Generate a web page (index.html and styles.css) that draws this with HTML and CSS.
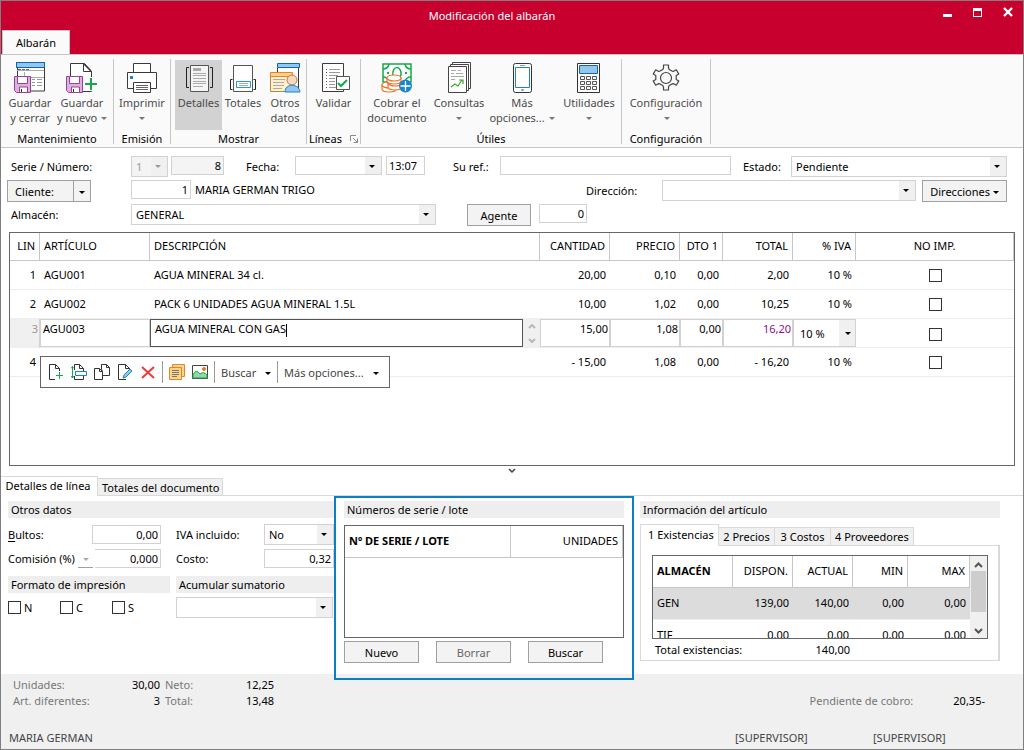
FILE: index.html
```html
<!DOCTYPE html>
<html lang="es">
<head>
<meta charset="utf-8">
<meta name="viewport" content="width=device-width, initial-scale=1">
<title>Modificación del albarán</title>
<link rel="stylesheet" href="styles.css">
</head>
<body>
<div class="window">
  <header class="titlebar">
    <h1 class="title">Modificación del albarán</h1>
    <div class="window-controls">
      <button type="button" aria-label="Minimizar"><svg width="12" height="12" viewBox="0 0 12 12"><path d="M1 8h9v3H1z" fill="#fff"/></svg></button>
      <button type="button" aria-label="Maximizar"><svg width="12" height="12" viewBox="0 0 12 12"><path d="M1 2h9v9H1zM2 5v5h7V5z" fill="#fff" fill-rule="evenodd"/></svg></button>
      <button type="button" aria-label="Cerrar"><svg width="12" height="12" viewBox="0 0 12 12"><path d="M2 2l8 8M10 2l-8 8" stroke="#fff" stroke-width="2.4"/></svg></button>
    </div>
    <button type="button" class="main-tab">Albarán</button>
  </header>

  <nav class="ribbon">
    <section class="group g-mant">
      <div class="tools">
        <button type="button" class="tool"><svg width="32" height="32" viewBox="0 0 32 32" fill="none"><path d="M3.500 7v23h27V7" fill="#fff" stroke="#3a3a3a"/><path d="M3 9.500h27M10 16.500h20M10.500 11v8" stroke="#aaa"/><path d="M4 8.500h3m1 0h3m1 0h3" stroke="#666"/><path d="M18 18.500h3m2 0h5M18 21.500h3m2 0h5M18 24.500h3m2 0h5" stroke="#999"/><rect x="2.500" y="1.500" width="28" height="5" fill="#92c7ee" stroke="#1266b1"/><path d="M.5 15.500h16v16h-14l-2-2z" fill="#deb0de" stroke="#98419a"/><path d="M3.500 15.500h10v7h-10zM5.500 31v-5h8v5" fill="#fff" stroke="#98419a"/><path d="M7.500 28v3" stroke="#333"/></svg><span>Guardar<br>y cerrar</span></button>
        <button type="button" class="tool"><svg width="32" height="32" viewBox="0 0 32 32" fill="none"><path d="M4.500 30V2.500h14l7 8v20H17" fill="#fff" stroke="#3a3a3a"/><path d="M17.500 2.500v8h8" stroke="#3a3a3a"/><path d="M18 3l7 7" stroke="#3a3a3a" stroke-width="1.500"/><path d="M.5 15.500h16v16h-14l-2-2z" fill="#deb0de" stroke="#98419a"/><path d="M3.500 15.500h10v7h-10zM5.500 31v-5h8v5" fill="#fff" stroke="#98419a"/><path d="M7.500 28v3" stroke="#333"/><path d="M24.500 16v14M17 23h15" stroke="#fafafa" stroke-width="4"/><path d="M25 17v12M19 23h12" stroke="#17a84a" stroke-width="2"/></svg><span>Guardar<br>y nuevo <i class="caret"></i></span></button>
      </div>
      <h2>Mantenimiento</h2>
    </section>
    <section class="group g-emis">
      <div class="tools">
        <button type="button" class="tool"><svg width="32" height="32" viewBox="0 0 32 32" fill="none" stroke="#3a3a3a"><path d="M7.500 12V2.500h17V12" fill="#fff"/><path d="M7 27.500H1.500v-16h29v16H25" fill="#fff"/><path d="M7.500 21.500h17v10h-17z" fill="#fff"/><path d="M10 24.500h12M10 26.500h12M10 28.500h12" stroke="#666"/><path d="M4 15h3v3H4z" fill="#1b83d3" stroke="none"/></svg><span>Imprimir<br><i class="caret"></i></span></button>
      </div>
      <h2>Emisión</h2>
    </section>
    <section class="group g-most">
      <div class="tools">
        <button type="button" class="tool active"><svg width="32" height="32" viewBox="0 0 32 32" fill="none"><path d="M7.500 4.500h18v26h-18z" fill="#f5f5f5" stroke="#555"/><path d="M10 7h8v3h-8z" fill="#aaa"/><path d="M10 12.500h13M10 14.500h13M10 17.500h13M10 20.500h13M10 22.500h13M10 25.500h10" stroke="#aaa"/><path d="M6 6.500H3.500v20H6M27 6.500h2.500v20H27" stroke="#222"/></svg><span>Detalles</span></button>
        <button type="button" class="tool"><svg width="32" height="32" viewBox="0 0 32 32" fill="none"><path d="M6.500 4.500h19v26h-19z" fill="#fff" stroke="#555"/><path d="M9.500 20.500h14v6h-14z" fill="#fff" stroke="#199bdc"/><path d="M12 22.500h9M12 24.500h9" stroke="#aaa"/><path d="M5.500 18.500h-2v10h2M26.500 18.500h2v10h-2" stroke="#222"/></svg><span>Totales</span></button>
        <button type="button" class="tool"><svg width="32" height="32" viewBox="0 0 32 32" fill="none"><path d="M8.500 7v22h21V7" fill="#fff" stroke="#3a3a3a"/><path d="M8.500 2.500h22v4h-22z" fill="#92c7ee" stroke="#1266b1"/><path d="M1.500 15h22v15.500h-22z" fill="#fff0cc" stroke="#b18a45"/><path d="M1.500 11.500h22v4h-22z" fill="#ffd285" stroke="#e7842b"/><path d="M4 18.500h12M4 21.500h11M4 24.500h11M4 27.500h9" stroke="#aaa"/><circle cx="23" cy="19" r="5" fill="#f8d8bc" stroke="#b67c5a"/><path d="M16 31c0-9 14-9 15 0z" fill="#92c7ee" stroke="#1b83c9"/></svg><span>Otros<br>datos</span></button>
      </div>
      <h2>Mostrar</h2>
    </section>
    <section class="group g-line">
      <div class="tools">
        <button type="button" class="tool"><svg width="32" height="32" viewBox="0 0 32 32" fill="none"><path d="M4.500 2.500h21v28h-21z" fill="#fff" stroke="#3a3a3a"/><path d="M11 8.500h11M11 11.500h11M11 14.500h9M11 17.500h6M11 20.500h6M11 23.500h6M11 26.500h7" stroke="#999"/><path d="M8 8h1v1H8zM8 14h1v1H8zM8 17h1v1H8zM8 23h1v1H8z" fill="#17a84a"/><path d="M8 11h1v1H8zM8 20h1v1H8zM8 26h1v1H8z" fill="#d22"/><path d="M18.500 15.500h13v13h-13z" fill="#fff" stroke="#555"/><path d="M20 22l3 3 6-6" stroke="#17a84a" stroke-width="2"/></svg><span>Validar</span></button>
      </div>
      <h2>Líneas <svg class="launcher" width="8" height="8" viewBox="0 0 8 8" fill="none" stroke="#888"><path d="M.5 6V.5H6M3 3l4 4M7.500 3.500v4h-4"/></svg></h2>
    </section>
    <section class="group g-util">
      <div class="tools">
        <button type="button" class="tool t-cob"><svg width="32" height="32" viewBox="0 0 32 32" fill="none"><path d="M2 3h28v18H2z" fill="#fff" stroke="#17a84a" stroke-width="1.500"/><path d="M2 8q5 0 6-5M24 3q1 5 6 5M2 16q5 0 6 5M24 21q1-5 6-5" stroke="#17a84a" stroke-width="1.500"/><path d="M12 15c-2-11 9-11 8-1l-2 4" stroke="#17a84a" stroke-width="1.500"/><circle cx="7" cy="12" r="1.200" fill="#17a84a"/><circle cx="25" cy="12" r="1.200" fill="#17a84a"/><g fill="#fff" stroke="#ec7426" stroke-width="1.200"><path d="M1 24v4c0 4 14 4 14 0v-4z"/><ellipse cx="8" cy="24" rx="7" ry="3"/><path d="M7 22v4c0 4 14 4 14 0v-4z"/><ellipse cx="14" cy="22" rx="7" ry="3"/><path d="M6 17v3c0 4 14 4 14 0v-3z"/><ellipse cx="13" cy="17" rx="7" ry="3"/></g><circle cx="24.500" cy="25" r="6.500" fill="#1b83c9"/><path d="M24.500 20v10M19.500 25h10" stroke="#fff" stroke-width="1.300"/></svg><span>Cobrar el<br>documento</span></button>
        <button type="button" class="tool t-cons"><svg width="32" height="32" viewBox="0 0 32 32" fill="#fff" stroke="#444"><path d="M9.500 1.500h18v26h-18z"/><path d="M7.500 3.500h18v26h-18z"/><path d="M5.500 5.500h18v26h-18z"/><path d="M8 9.500h5m2 0h3M8 12.500h3m2 0h7M8 15.500h13M8 18.500h4" fill="none" stroke="#aaa"/><path d="M8 26l4-3 3 2 4-6m-3 0h4v4" fill="none" stroke="#3ca52d" stroke-width="1.200"/></svg><span>Consultas<br><i class="caret"></i></span></button>
        <button type="button" class="tool t-mas"><svg width="32" height="32" viewBox="0 0 32 32" fill="none"><rect x="7.500" y="2.500" width="18" height="29" rx="2" fill="#fff" stroke="#333"/><path d="M9.500 6.500h14v20h-14z" stroke="#1b83d3"/><path d="M14 4.500h5M15.500 28.500h2v1h-2z" stroke="#999"/></svg><span>Más<br>opciones... <i class="caret"></i></span></button>
        <button type="button" class="tool t-utl"><svg width="32" height="32" viewBox="0 0 32 32" fill="none"><path d="M4.500 2.500h22v29h-22z" fill="#fff" stroke="#333"/><path d="M6.500 4.500h18v8h-18z" fill="#92c7ee" stroke="#1266b1"/><path d="M7.500 15.500h4v3h-4zM13.500 15.500h4v3h-4zM19.500 15.500h4v3h-4zM7.500 20.500h4v3h-4zM13.500 20.500h4v3h-4zM19.500 20.500h4v3h-4zM7.500 25.500h4v3h-4zM13.500 25.500h4v3h-4zM19.500 25.500h4v3h-4z" stroke="#555"/></svg><span>Utilidades<br><i class="caret"></i></span></button>
      </div>
      <h2>Útiles</h2>
    </section>
    <section class="group g-conf">
      <div class="tools">
        <button type="button" class="tool"><svg width="32" height="32" viewBox="0 0 32 32" fill="none" stroke="#444" stroke-width="1.200" stroke-linejoin="round"><path d="M12.800 8.500L13.500 7V4h5v3l.7 1.500 2.800 1.600 1.700.2 2.600-1.500 2.500 4.300-2.600 1.500v3.800l2.600 1.500-2.500 4.300-2.600-1.500-1.700.2-2.800 1.600-.7 1.500v3h-5v-3l-.7-1.500-2.800-1.600-1.700-.2-2.600 1.500-2.500-4.300 2.600-1.500v-3.800l-2.600-1.500 2.500-4.300 2.600 1.500 1.700-.2z"/><circle cx="16" cy="17" r="5.500"/></svg><span>Configuración<br><i class="caret"></i></span></button>
      </div>
      <h2>Configuración</h2>
    </section>
  </nav>

  <main class="document">
    <form class="head-form">
      <div class="row">
        <label class="lead" for="serie">Serie / Número:</label>
        <span class="combo off w-serie"><select id="serie" disabled><option>1</option></select></span>
        <input class="field num off w-num" aria-label="Número" value="8" readonly>
        <label class="l-fecha" for="fecha">Fecha:</label>
        <span class="combo short w-fecha"><select id="fecha"><option></option></select></span>
        <input class="field w-hora" aria-label="Hora" value="13:07">
        <label class="l-ref" for="ref">Su ref.:</label>
        <input class="field grow" id="ref">
        <label class="l-estado" for="estado">Estado:</label>
        <span class="combo w-estado"><select id="estado"><option>Pendiente</option></select></span>
      </div>
      <div class="row row-client">
        <span class="split"><button type="button">Cliente:</button><button type="button" class="more" aria-label="Opciones de cliente"><i class="caret"></i></button></span>
        <input class="field num w-cli" aria-label="Código de cliente" value="1">
        <span class="client-name grow">MARIA GERMAN TRIGO</span>
        <label class="l-dir" for="dir">Dirección:</label>
        <span class="combo w-dir"><select id="dir"><option></option></select></span>
        <button type="button" class="btn w-dirs">Direcciones <i class="caret"></i></button>
      </div>
      <div class="row">
        <label class="lead" for="almacen">Almacén:</label>
        <span class="combo w-alm"><select id="almacen"><option>GENERAL</option></select></span>
        <button type="button" class="btn w-agente">Agente</button>
        <input class="field num w-ag" aria-label="Código de agente" value="0">
      </div>
    </form>

    <div class="lines">
      <table class="grid">
        <colgroup><col class="c-lin"><col class="c-art"><col><col class="c-70"><col class="c-70"><col class="c-dto"><col class="c-70"><col class="c-iva"><col class="c-imp"></colgroup>
        <thead><tr><th class="r">LIN</th><th>ARTÍCULO</th><th>DESCRIPCIÓN</th><th class="r">CANTIDAD</th><th class="r">PRECIO</th><th class="r">DTO 1</th><th class="r">TOTAL</th><th class="r">% IVA</th><th class="c">NO IMP.</th></tr></thead>
        <tbody>
          <tr><td class="r">1</td><td>AGU001</td><td>AGUA MINERAL 34 cl.</td><td class="r">20,00</td><td class="r">0,10</td><td class="r">0,00</td><td class="r">2,00</td><td class="r">10 %</td><td class="c"><input type="checkbox" aria-label="No imprimir línea 1"></td></tr>
          <tr><td class="r">2</td><td>AGU002</td><td>PACK 6 UNIDADES AGUA MINERAL 1.5L</td><td class="r">10,00</td><td class="r">1,02</td><td class="r">0,00</td><td class="r">10,25</td><td class="r">10 %</td><td class="c"><input type="checkbox" aria-label="No imprimir línea 2"></td></tr>
          <tr class="editing"><td class="lin">3</td><td><input class="cell" aria-label="Artículo" value="AGU003"></td><td><div class="desc"><div class="desc-edit" contenteditable="true" role="textbox" aria-label="Descripción">AGUA MINERAL CON GAS<i class="cursor"></i></div><div class="spin"><svg width="8" height="5" viewBox="0 0 8 5"><path d="M1 4l3-3 3 3" fill="none" stroke="#b8b8b8" stroke-width="2"/></svg><svg width="8" height="5" viewBox="0 0 8 5"><path d="M1 1l3 3 3-3" fill="none" stroke="#b8b8b8" stroke-width="2"/></svg></div></div></td><td><input class="cell num" aria-label="Cantidad" value="15,00"></td><td><input class="cell num" aria-label="Precio" value="1,08"></td><td><input class="cell num" aria-label="Descuento" value="0,00"></td><td><input class="cell num total" aria-label="Total" value="16,20"></td><td><span class="combo in-cell"><select aria-label="IVA"><option>10 %</option></select></span></td><td class="c"><input type="checkbox" aria-label="No imprimir línea 3"></td></tr>
          <tr><td class="r">4</td><td></td><td></td><td class="r">- 15,00</td><td class="r">1,08</td><td class="r">0,00</td><td class="r">- 16,20</td><td class="r">10 %</td><td class="c"><input type="checkbox" aria-label="No imprimir línea 4"></td></tr>
        </tbody>
      </table>
      <div class="popup" role="toolbar" aria-label="Acciones de línea">
        <button type="button" aria-label="Nueva línea"><svg width="16" height="16" viewBox="0 0 16 16" fill="none" stroke="#333"><path d="M7 15.500H1.500V.5h6l4 4V7M7.500.5v4h4"/><path d="M11.500 8v7M8 11.500h7" stroke="#17a84a"/></svg></button>
        <button type="button" aria-label="Insertar línea"><svg width="16" height="16" viewBox="0 0 16 16" fill="none" stroke="#333"><path d="M3.500 6V.5h5l4 4V7M8.500.5v4h4M3.500 12v3.500h9V12"/><path d="M4.500 7.500h11v4h-11z" fill="#fff" stroke="#1b83c9"/><path d="M1.500 2v12M0 4.500l1.500-2 1.500 2M0 12l1.500 2L3 12" stroke="#17a84a"/></svg></button>
        <button type="button" aria-label="Duplicar línea"><svg width="16" height="16" viewBox="0 0 16 16" fill="#fff" stroke="#333"><path d="M.5 4.500h5l3 3v8h-8zM5.500 4.500v3h3"/><path d="M7.500 5V.5h5l3 3v8h-7V8zM12.500.5v3h3"/></svg></button>
        <button type="button" aria-label="Editar línea"><svg width="16" height="16" viewBox="0 0 16 16" fill="none" stroke="#333"><path d="M9 15.500H1.500V.5h7l4 4V6M8.500.5v4h4"/><path d="M6 14l1-3 6-6 2 2-6 6z" fill="#92c7ee" stroke="#1b83c9"/></svg></button>
        <button type="button" aria-label="Borrar línea"><svg width="16" height="16" viewBox="0 0 16 16"><path d="M2 3l12 11M14 3L2 14" stroke="#ee3a36" stroke-width="2"/></svg></button>
        <span class="bar"></span>
        <button type="button" aria-label="Notas"><svg width="16" height="16" viewBox="0 0 16 16" fill="#f8d588" stroke="#e7842b"><path d="M3.500 .5h12v12h-12z"/><path d="M.5 3.500h12v12h-12z"/><path d="M3 6.500h7M3 8.500h7M3 10.500h7M3 12.500h5" stroke="#777"/></svg></button>
        <button type="button" aria-label="Imagen"><svg width="16" height="16" viewBox="0 0 16 16" fill="#fff" stroke="#444"><path d="M.5 1.500h15v13H.5z"/><path d="M1 11q3-7 7-1 4-3 7 1v3H1z" fill="#94d6a5" stroke="#17a84a"/><circle cx="12" cy="5" r="1.500" fill="#ec7426" stroke="#ec7426"/></svg></button>
        <span class="bar"></span>
        <button type="button" class="p-buscar">Buscar <i class="caret"></i></button>
        <span class="bar"></span>
        <button type="button" class="p-mas">Más opciones... <i class="caret"></i></button>
      </div>
    </div>
    <button type="button" class="expander" aria-label="Contraer panel"><svg width="8" height="6" viewBox="0 0 8 6"><path d="M1 1l3 3 3-3" fill="none" stroke="#444" stroke-width="1.500"/></svg></button>
  </main>

  <div class="tabs detail-tabs" role="tablist">
    <button type="button" class="tab on" role="tab" aria-selected="true">Detalles de línea</button>
    <button type="button" class="tab" role="tab" aria-selected="false">Totales del documento</button>
  </div>

  <div class="panels">
    <section class="other">
      <h3 class="wide">Otros datos</h3>
      <div class="pair">
        <label for="bultos"><u>B</u>ultos:</label>
        <input class="field num w-69" id="bultos" value="0,00">
        <label for="comision">Comisión (%)</label>
        <span class="commission"><button type="button" class="mini" aria-label="Tipo de comisión"><i class="caret"></i></button><input class="field num" id="comision" value="0,000"></span>
      </div>
      <div class="pair second">
        <label for="iva">IVA incluido:</label>
        <span class="combo"><select id="iva"><option>No</option></select></span>
        <label for="costo">Costo:</label>
        <input class="field num" id="costo" value="0,32">
      </div>
      <h3>Formato de impresión</h3>
      <h3 class="second">Acumular sumatorio</h3>
      <div class="checks">
        <label><input type="checkbox">N</label>
        <label><input type="checkbox">C</label>
        <label><input type="checkbox">S</label>
      </div>
      <span class="combo second acum"><select aria-label="Acumular sumatorio"><option></option></select></span>
    </section>

    <section class="serials">
      <h3>Números de serie / lote</h3>
      <div class="serial-box">
        <table class="grid serial-table">
          <colgroup><col><col class="c-uni"></colgroup>
          <thead><tr><th><b>Nº DE SERIE / LOTE</b></th><th class="r">UNIDADES</th></tr></thead>
        </table>
      </div>
      <div class="actions">
        <button type="button" class="btn">Nuevo</button>
        <button type="button" class="btn" disabled>Borrar</button>
        <button type="button" class="btn">Buscar</button>
      </div>
    </section>

    <section class="article">
      <h3>Información del artículo</h3>
      <div class="tabs article-tabs" role="tablist">
        <button type="button" class="tab on" role="tab" aria-selected="true">1 Existencias</button>
        <button type="button" class="tab" role="tab" aria-selected="false">2 Precios</button>
        <button type="button" class="tab" role="tab" aria-selected="false">3 Costos</button>
        <button type="button" class="tab" role="tab" aria-selected="false">4 Proveedores</button>
      </div>
      <div class="sheet">
        <div class="stock">
          <div class="stock-view">
            <table class="grid stock-table">
              <colgroup><col><col class="c-60"><col class="c-60"><col class="c-55"><col class="c-62"></colgroup>
              <thead><tr><th><b>ALMACÉN</b></th><th class="r">DISPON.</th><th class="r">ACTUAL</th><th class="r">MIN</th><th class="r">MAX</th></tr></thead>
              <tbody>
                <tr class="selected"><td>GEN</td><td class="r">139,00</td><td class="r">140,00</td><td class="r">0,00</td><td class="r">0,00</td></tr>
                <tr><td>TIF</td><td class="r">0,00</td><td class="r">0,00</td><td class="r">0,00</td><td class="r">0,00</td></tr>
              </tbody>
            </table>
          </div>
          <div class="scrollbar"><svg width="9" height="6" viewBox="0 0 9 6"><path d="M1 5l3.500-3.500L8 5" fill="none" stroke="#555" stroke-width="2"/></svg><div class="thumb"></div><svg width="9" height="6" viewBox="0 0 9 6"><path d="M1 1l3.500 3.500L8 1" fill="none" stroke="#555" stroke-width="2"/></svg></div>
        </div>
        <div class="stock-total"><span>Total existencias:</span><output>140,00</output></div>
      </div>
    </section>
  </div>

  <footer class="footer">
    <div class="summary">
      <dl class="totals">
        <dt>Unidades:</dt><dd>30,00</dd><dt>Neto:</dt><dd>12,25</dd>
        <dt>Art. diferentes:</dt><dd>3</dd><dt>Total:</dt><dd>13,48</dd>
      </dl>
      <dl class="pending"><dt>Pendiente de cobro:</dt><dd>20,35-</dd></dl>
    </div>
    <div class="status"><span class="grow">MARIA GERMAN</span><span class="user">[SUPERVISOR]</span><span class="user">[SUPERVISOR]</span></div>
  </footer>
</div>
</body>
</html>
```
FILE: styles.css
```css
* { box-sizing: border-box; }
body { margin: 0; font: 11px/15px "Noto Sans", "Open Sans", sans-serif; color: #000; }
button, input, select { font: inherit; color: inherit; margin: 0; padding: 0; border: 0; border-radius: 0; background: none; }
h1, h2, h3, dl, dd { margin: 0; font-size: inherit; font-weight: normal; }
svg { display: block; }
u { text-underline-offset: 2px; }

.window { display: flex; flex-direction: column; min-height: 100vh; border: 1px solid #7f7f7f; background: #fff; }
.grow { flex: 1; }
.caret { display: inline-block; border: 3px solid transparent; border-top-color: currentColor; border-bottom: 0; vertical-align: 2px; }

/* Title bar */
.titlebar { position: relative; display: flex; flex-direction: column; height: 54px; background: #c8002d; border-bottom: 1px solid #c6c6c6; }
.title { height: 29px; line-height: 29px; padding-right: 40px; text-align: center; color: #fff; }
.window-controls { position: absolute; right: 9px; top: 5px; display: flex; gap: 18px; }
.main-tab { align-self: flex-start; width: 68px; height: 25px; margin-left: 1px; background: #fafafa; border: 1px solid #c6c6c6; border-bottom: 0; }

/* Ribbon */
.ribbon { display: flex; padding: 4px 0 3px; background: #fafafa; border-bottom: 1px solid #c6c6c6; }
.group { display: flex; flex-direction: column; height: 85px; border-right: 1px solid #c6c6c6; }
.group h2 { display: flex; justify-content: center; align-items: center; gap: 8px; line-height: 11px; }
.tools { display: flex; flex: 1; justify-content: center; padding-top: 1px; }
.tool { display: flex; flex: 1; flex-direction: column; align-items: center; height: 70px; padding-top: 1px; gap: 2px; color: #4b4b4b; white-space: nowrap; }
.tool .caret { color: #777; margin-left: 1px; }
.tool.active { flex: 0 0 47px; background: #d2d2d2; }
.g-mant { width: 113px; }
.g-mant .tools { padding-right: 5px; padding-left: 3px; }
.g-emis { width: 57px; }
.g-most { width: 136px; }
.g-most .tools { padding-left: 4px; }
.g-line { width: 54px; }
.g-util { width: 261px; }
.g-util .tools { justify-content: flex-start; }
.t-cob { flex: 0 0 72px; }
.t-cons { flex: 0 0 52px; }
.t-mas { flex: 0 0 74px; }
.t-utl { flex: 0 0 60px; }
.g-conf { width: 89px; }

/* Form */
.document { display: flex; flex: 1; flex-direction: column; padding: 8px 8px 0; }
.head-form { display: flex; flex-direction: column; gap: 2px; padding-right: 8px; }
.row { display: flex; height: 22px; line-height: 22px; }
.field, .combo select { height: 19px; border: 1px solid #d2d2d2; background-color: #fff; }
.field { min-width: 0; padding: 0 2px; line-height: 15px; }
.num { text-align: right; }
.combo { position: relative; display: block; line-height: 15px; }
.combo select { display: block; width: 100%; height: 21px; padding: 0 18px 0 4px; appearance: none; background: linear-gradient(#f0f0f0, #f0f0f0) right / 16px 100% no-repeat #fff; }
.combo.short select { height: 19px; }
.combo::after { content: ""; position: absolute; right: 7px; top: 9px; border: 3px solid transparent; border-top-color: currentColor; border-bottom: 0; pointer-events: none; }
.off.field, .off select { background-color: #f4f4f4; opacity: 1; }
.combo.off { color: #999; }
.btn, .split button { border: 1px solid #a0a0a0; background: #f3f3f3; line-height: 15px; }
.btn { height: 22px; }
.btn:disabled { color: #666; }
.lead { width: 122px; padding-left: 2px; }
.w-serie { width: 37px; }
.w-num { width: 53px; margin-left: 3px; }
.l-fecha { width: 71px; padding-left: 22px; }
.w-fecha { width: 87px; }
.w-hora { width: 39px; margin-left: 4px; }
.l-ref { width: 75px; padding-left: 28px; }
.l-estado { width: 60px; padding-left: 12px; }
.w-estado { width: 216px; }
.row-client { margin-left: -2px; }
.split { display: flex; width: 84px; height: 22px; margin-right: 40px; }
.split button { flex: 1; padding-right: 12px; }
.split .more { flex: 0 0 17px; padding: 0; border-left: 0; }
.w-cli { width: 60px; margin-right: 4px; }
.client-name { line-height: 20px; }
.l-dir { width: 76px; }
.w-dir { width: 254px; margin-right: 6px; }
.w-dirs { width: 85px; white-space: nowrap; }
.w-alm { width: 305px; }
.w-agente { width: 64px; margin: 0 8px 0 31px; }
.w-ag { width: 48px; }

/* Document lines */
.lines { position: relative; flex: 1; margin-top: 6px; border: 1px solid #666; }
.grid { width: 100%; table-layout: fixed; border-collapse: separate; border-spacing: 0; }
.grid th, .grid td { padding: 0 4px 2px; text-align: left; font-weight: normal; white-space: nowrap; }
.grid th { height: 28px; border-right: 1px solid #c6c6c6; border-bottom: 1px solid #c6c6c6; }
.grid td { height: 29px; border-bottom: 1px solid #eee; }
.grid .r { text-align: right; }
.grid .c { text-align: center; }
.c-lin { width: 30px; }
.c-art { width: 110px; }
.c-70 { width: 70px; }
.c-dto { width: 43px; }
.c-iva { width: 63px; }
.c-imp { width: 158px; }
.grid .editing td { padding: 0; }
.grid .editing .lin { padding: 2px 1px; vertical-align: top; text-align: right; color: #999; background: #f0f0f0; border-right: 1px solid #d2d2d2; }
.cell { display: block; width: 100%; height: 28px; padding: 0 1px 10px 2px; border: 1px solid #d2d2d2; }
.total { color: #8a0f8a; }
.desc { display: flex; height: 28px; }
.desc-edit { flex: 1; padding: 1px 4px; border: 1px solid #555; outline: 0; }
.cursor { display: inline-block; width: 1px; height: 13px; background: #000; vertical-align: middle; }
.spin { display: flex; flex-direction: column; justify-content: space-around; align-items: center; width: 17px; background: #f0f0f0; }
.in-cell select { height: 28px; padding-left: 6px; }
.in-cell::after { top: 13px; right: 5px; }
input[type=checkbox] { appearance: none; width: 13px; height: 13px; margin: 0; border: 1px solid #333; background: #fff; vertical-align: middle; }
.popup { position: absolute; left: 30px; top: 123px; display: flex; align-items: center; gap: 7px; width: 350px; height: 32px; padding: 0 7px; border: 1px solid #666; background: #fff; color: #444; white-space: nowrap; }
.popup .bar { width: 1px; height: 22px; background: #999; margin: 0 -1px; }
.popup .caret { margin-left: 6px; color: #000; }
.expander { align-self: center; height: 10px; }

/* Tabs */
.tabs { display: flex; align-items: flex-end; }
.tab { height: 18px; padding: 0 4px; border: 1px solid #d9d9d9; border-left: 0; border-bottom: 0; background: #f0f0f0; white-space: nowrap; }
.tab.on { height: 20px; background: #fff; }
.detail-tabs { height: 20px; box-shadow: inset 0 -1px #d9d9d9; }
.detail-tabs .on { width: 97px; padding: 0 6px 2px 4px; }
.detail-tabs .tab:not(.on) { width: 125px; border-bottom: 1px solid #d9d9d9; }

/* Lower panels */
.panels { display: grid; grid-template-columns: 333px 300px minmax(360px, 1fr); height: 178px; }
.panels h3 { height: 17px; line-height: 17px; padding: 0 3px; background: #eee; }
.other { display: grid; grid-template-columns: 162px 158px; column-gap: 6px; align-content: start; padding: 5px 0 0 7px; overflow: hidden; }
.wide { grid-column: span 2; }
.pair { display: grid; grid-template-columns: 84px 1fr; gap: 3px 0; align-items: center; grid-auto-rows: 21px; padding: 6px 9px 7px 0; }
.pair.second { grid-template-columns: 88px 1fr; padding-right: 0; }
.pair label { white-space: nowrap; }
.pair .field { width: 100%; }
.commission { display: flex; margin-left: -14px; gap: 2px; }
.mini { flex: 0 0 15px; border-bottom: 1px solid #a0a0a0; color: #aaa; }
.commission .field { border-left: 0; }
.checks { display: flex; align-items: center; height: 29px; }
.checks label { display: flex; align-items: center; gap: 3px; width: 52px; }
.acum { margin: 4px 1px 0 0; }
.serials { position: relative; height: 184px; padding: 3px 8px; border: 2px solid #0a7fc4; }
.serial-box { height: 113px; margin-top: 7px; border: 1px solid #666; }
.serial-table th { height: 32px; }
.c-uni { width: 112px; }
.actions { display: flex; gap: 17px; margin-top: 3px; }
.actions .btn { width: 75px; }
.article { padding: 5px 23px 0 6px; }
.article-tabs { margin-top: 6px; }
.article-tabs .tab { min-width: 56px; }
.article-tabs .tab:last-child { min-width: 82px; }
.article-tabs .on { position: relative; margin-bottom: -1px; height: 22px; width: 79px; padding: 0 7px 2px; border-left: 1px solid #d9d9d9; }
.sheet { height: 116px; padding: 9px 10px 9px 11px; border: 1px solid #d9d9d9; border-right-width: 2px; }
.stock { display: flex; height: 84px; border: 1px solid #666; }
.stock-view { flex: 1; overflow: hidden; }
.stock-table th, .stock-table td { height: 32px; }
.c-60 { width: 60px; }
.c-55 { width: 55px; }
.c-62 { width: 62px; }
.selected td { background: #dcdcdc; }
.scrollbar { display: flex; flex-direction: column; align-items: center; justify-content: space-between; width: 17px; padding: 6px 1px 4px; background: #f0f0f0; }
.thumb { width: 15px; height: 41px; margin-bottom: 14px; background: #cdcdcd; }
.stock-total { display: flex; width: 200px; justify-content: space-between; padding: 3px 2px 0 3px; }

/* Footer */
.footer { display: flex; flex-direction: column; justify-content: space-between; height: 75px; padding: 3px 8px 4px; background: #f0f0f0; color: #444; }
.summary { display: flex; justify-content: space-between; align-items: flex-end; padding: 0 30px 0 4px; }
.summary dt { color: #777; }
.summary dd { color: #000; text-align: right; }
.totals { display: grid; grid-template-columns: 100px 47px 58px 56px; row-gap: 1px; }
.totals dd + dt { padding-left: 5px; }
.totals dd:nth-of-type(2) + dt { padding-left: 0; }
.pending { display: flex; gap: 40px; }
.status { display: flex; padding-right: 4px; }
.user { width: 138px; }
```
